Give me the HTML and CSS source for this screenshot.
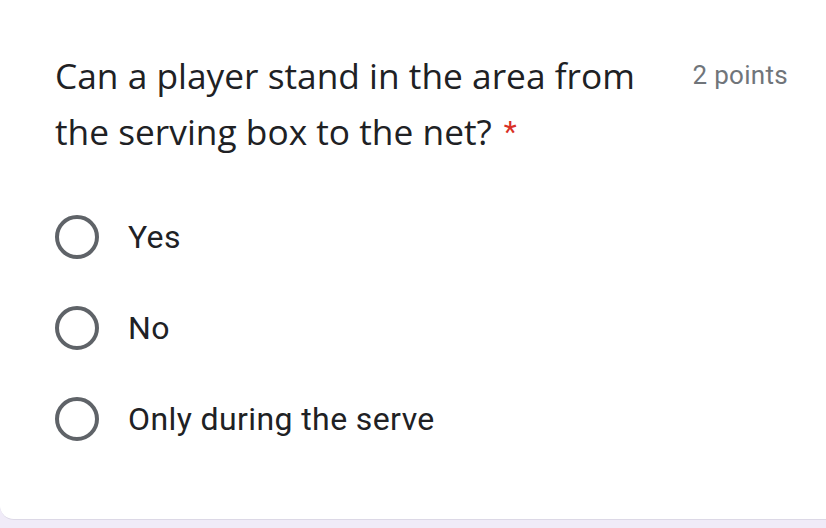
FILE: index.html
```html
<!DOCTYPE html>
<html>
<head>
<meta charset="utf-8">
<link rel="stylesheet" href="styles.css">
</head>
<body>
<div class="card">
  <div class="header">
    <div class="title">Can a player stand in the area from the serving box to the net?<span class="req">*</span></div>
    <div class="points">2 points</div>
  </div>
  <div class="options">
    <div class="option"><span class="radio"></span><span class="label">Yes</span></div>
    <div class="option"><span class="radio"></span><span class="label">No</span></div>
    <div class="option"><span class="radio"></span><span class="label">Only during the serve</span></div>
  </div>
</div>
</body>
</html>
```

FILE: styles.css
```css
html, body {
  margin: 0;
  padding: 0;
}
body {
  background: #f0ebf8;
  width: 826px;
  height: 528px;
  overflow: hidden;
}
.card {
  background: #fff;
  height: 520px;
  box-sizing: border-box;
  border-bottom: 1px solid #dcd8e6;
  border-radius: 0 0 0 14px;
  padding: 47px 38px 0 55px;
}
.header {
  display: flex;
  justify-content: space-between;
  align-items: flex-start;
}
.title {
  font-family: "Open Sans", sans-serif;
  font-size: 35.3px;
  line-height: 56px;
  color: #202124;
  width: 600px;
}
.req {
  color: #d93025;
  font-family: Roboto, sans-serif;
  font-size: 30px;
  line-height: 1;
  vertical-align: 3px;
  margin-left: 12px;
}
.points {
  font-family: Roboto, sans-serif;
  font-size: 26px;
  letter-spacing: 0.3px;
  line-height: 56px;
  color: #70757a;
}
.options {
  margin-top: 32px;
  display: flex;
  flex-direction: column;
}
.option {
  height: 91px;
  display: flex;
  align-items: center;
}
.radio {
  width: 44px;
  height: 44px;
  box-sizing: border-box;
  border: 4.5px solid #5f6368;
  border-radius: 50%;
  margin-right: 29px;
}
.label {
  font-family: Roboto, sans-serif;
  font-size: 32px;
  letter-spacing: 0.4px;
  color: #202124;
}
```
